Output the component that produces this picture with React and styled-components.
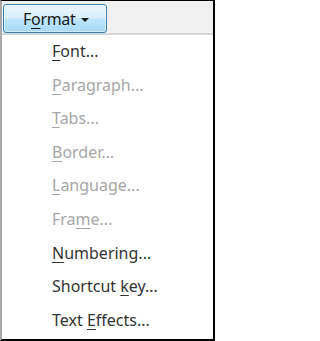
import React from "react";
import styled, { createGlobalStyle } from "styled-components";

const GlobalStyle = createGlobalStyle`
  html, body {
    margin: 0;
    padding: 0;
    background: #ffffff;
  }
  body {
    font-family: "Noto Sans", "Open Sans", sans-serif;
  }
`;

const Frame = styled.div`
  box-sizing: border-box;
  width: 215px;
  height: 341px;
  border-top: 1px solid #000;
  border-right: 2px solid #000;
  border-bottom: 2px solid #000;
  border-left: 2px solid #a9a9a9;
  display: flex;
  flex-direction: column;
  background: #fff;
`;

const Toolbar = styled.div`
  box-sizing: border-box;
  height: 34px;
  padding: 3px 0 0 1px;
  background: #f0f0f0;
  border-bottom: 2px solid #d6d6d6;
  display: flex;
  align-items: flex-start;
`;

const MenuButton = styled.button`
  box-sizing: border-box;
  width: 104px;
  height: 29px;
  padding: 0 0 0 19px;
  display: flex;
  align-items: center;
  gap: 5px;
  border: 1px solid #3c7fb1;
  border-radius: 3px;
  background: linear-gradient(
    to bottom,
    #eaf5fd 0%,
    #d9eefc 48%,
    #bee6fd 52%,
    #a7d9f5 100%
  );
  box-shadow: inset 0 0 0 1px rgba(255, 255, 255, 0.45);
  font-family: "Noto Sans", "Open Sans", sans-serif;
  font-size: 16px;
  letter-spacing: -0.3px;
  color: #1a1a1a;
  cursor: default;
`;

const Caret = styled.span`
  width: 0;
  height: 0;
  border-left: 4px solid transparent;
  border-right: 4px solid transparent;
  border-top: 4px solid #1a1a1a;
  margin-top: 2px;
`;

const Menu = styled.ul`
  list-style: none;
  margin: 0;
  padding: 0;
  flex: 1;
`;

const Item = styled.li`
  height: 33.6px;
  line-height: 33.6px;
  padding-left: 50px;
  font-size: 16px;
  color: ${(p) => (p.$disabled ? "#a6a6a6" : "#333333")};
  white-space: nowrap;
`;

const Key = styled.span`
  text-decoration: underline;
  text-underline-offset: 3px;
`;

const items = [
  { pre: "", key: "F", post: "ont..." },
  { pre: "", key: "P", post: "aragraph...", disabled: true },
  { pre: "", key: "T", post: "abs...", disabled: true },
  { pre: "", key: "B", post: "order...", disabled: true },
  { pre: "", key: "L", post: "anguage...", disabled: true },
  { pre: "Fra", key: "m", post: "e...", disabled: true },
  { pre: "", key: "N", post: "umbering..." },
  { pre: "Shortcut ", key: "k", post: "ey..." },
  { pre: "Text ", key: "E", post: "ffects..." },
];

export default function App() {
  return (
    <>
      <GlobalStyle />
      <Frame>
        <Toolbar>
          <MenuButton>
            <span>
              F<Key>o</Key>rmat
            </span>
            <Caret />
          </MenuButton>
        </Toolbar>
        <Menu>
          {items.map((it, i) => (
            <Item key={i} $disabled={it.disabled}>
              {it.pre}
              <Key>{it.key}</Key>
              {it.post}
            </Item>
          ))}
        </Menu>
      </Frame>
    </>
  );
}
